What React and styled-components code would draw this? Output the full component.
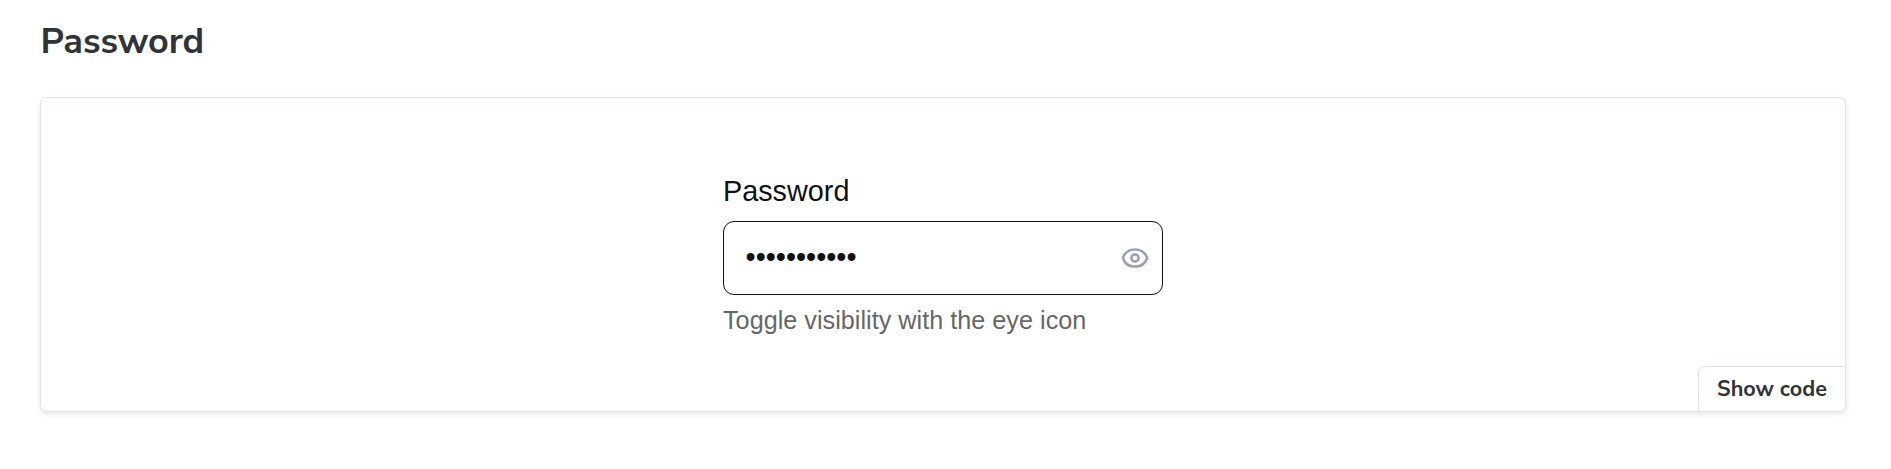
import React, { useState } from "react";
import styled, { createGlobalStyle } from "styled-components";

const GlobalStyle = createGlobalStyle`
  *, *::before, *::after { box-sizing: border-box; }
  body { margin: 0; background: #fff; }
`;

const Page = styled.main`
  padding: 18px 45px 56px 40px;
  font-family: "Nunito Sans", "Open Sans", sans-serif;
  color: #2e3438;
`;

const Title = styled.h2`
  margin: 0 0 31px;
  padding-left: 0.6px;
  font-size: 36px;
  line-height: 48px;
  font-weight: 700;
`;

const Preview = styled.section`
  position: relative;
  display: flex;
  justify-content: center;
  height: 315px;
  padding-top: 75px;
  border: 1px solid #dde4e7;
  border-radius: 7px;
  box-shadow: 0 2px 5px rgba(0, 0, 0, 0.1);
  background: #fff;
`;

const Field = styled.div`
  display: flex;
  flex-direction: column;
  width: 440px;
  font-family: "Liberation Sans", Arial, sans-serif;
`;

const Label = styled.label`
  height: 48px;
  font-size: 28.8px;
  line-height: 36px;
  color: #111;
`;

const InputBox = styled.div`
  display: flex;
  align-items: center;
  justify-content: space-between;
  height: 74px;
  padding: 0 13.5px 1px 21.6px;
  border: 1px solid #111;
  border-radius: 11px;
`;

const Value = styled.span`
  margin-bottom: 1px;
  font-size: 28.8px;
  line-height: 32px;
  color: #111;
`;

const Toggle = styled.button`
  display: flex;
  padding: 0;
  border: 0;
  background: none;
  color: #9aa2b1;
`;

const Helper = styled.p`
  margin: 9px 0 0;
  font-size: 25.2px;
  line-height: 32px;
  letter-spacing: 0.02px;
  white-space: nowrap;
  color: #666;
`;

const CodeButton = styled.button`
  position: absolute;
  right: 0;
  bottom: 0;
  width: 147px;
  height: 45px;
  padding: 0;
  border: solid #dde4e7;
  border-width: 1px 0 0 1px;
  border-radius: 7px 0 6px 0;
  background: #fff;
  font-family: inherit;
  font-size: 21.6px;
  font-weight: 700;
  color: #2e3438;
`;

const EyeIcon = () => (
  <svg width="28" height="28" viewBox="0 0 28 28" fill="none" stroke="currentColor" strokeWidth="2.5">
    <path d="M1.9 14C3.6 8.6 8.3 5.4 14 5.4S24.4 8.6 26.1 14C24.4 19.4 19.7 22.6 14 22.6S3.6 19.4 1.9 14Z" />
    <circle cx="14" cy="14" r="3.6" />
  </svg>
);

export default function App() {
  const [visible, setVisible] = useState(false);
  return (
    <>
      <GlobalStyle />
      <Page>
        <Title>Password</Title>
        <Preview>
          <Field>
            <Label>Password</Label>
            <InputBox>
              <Value>{visible ? "password123" : "•".repeat(11)}</Value>
              <Toggle aria-label="Toggle visibility" onClick={() => setVisible(!visible)}>
                <EyeIcon />
              </Toggle>
            </InputBox>
            <Helper>Toggle visibility with the eye icon</Helper>
          </Field>
          <CodeButton>Show code</CodeButton>
        </Preview>
      </Page>
    </>
  );
}
